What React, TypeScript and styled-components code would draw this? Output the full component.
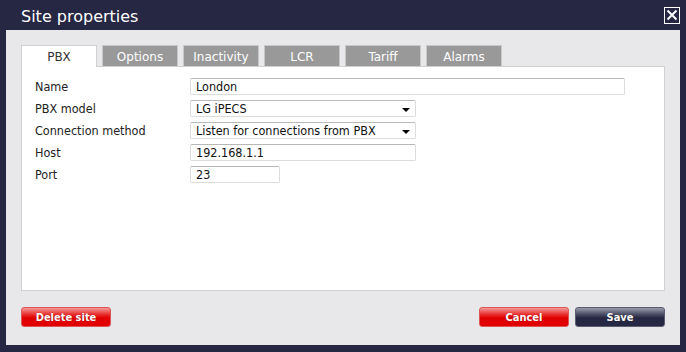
import React from "react";
import styled, { createGlobalStyle } from "styled-components";

const Global = createGlobalStyle`
  html, body { margin: 0; padding: 0; background: #252743; }
  body { width: 686px; height: 352px; overflow: hidden; font-family: "DejaVu Sans", Verdana, sans-serif; }
`;

const Dialog = styled.div`
  width: 686px;
  height: 352px;
  background: #252743;
  box-sizing: border-box;
  padding: 0 6px 7px 6px;
  display: flex;
  flex-direction: column;
`;

const TitleBar = styled.div`
  height: 30px;
  display: flex;
  align-items: center;
  justify-content: space-between;
  padding-left: 15px;
`;

const Title = styled.div`
  color: #fff;
  font-family: "DejaVu Sans", Verdana, sans-serif;
  font-size: 16px;
  margin-top: 2px;
`;

const Close = styled.div`
  width: 14px;
  height: 15px;
  border: 1px solid #fff;
  display: flex;
  align-items: center;
  justify-content: center;
`;

const Body = styled.div`
  flex: 1;
  background: #e8e8ea;
  padding: 15px 15px 0 15px;
  display: flex;
  flex-direction: column;
`;

const Tabs = styled.div`
  display: flex;
  gap: 5px;
  height: 21px;
`;

const Tab = styled.div<{ $active?: boolean }>`
  width: 76px;
  box-sizing: border-box;
  height: ${(p) => (p.$active ? "22px" : "21px")};
  background: ${(p) => (p.$active ? "#fff" : "#999")};
  border: 1px solid ${(p) => (p.$active ? "#d0d0d0" : "#c8c8c8")};
  border-bottom: none;
  color: ${(p) => (p.$active ? "#333" : "#fff")};
  font-size: 12px;
  padding-top: 1px;
  display: flex;
  align-items: center;
  justify-content: center;
  position: relative;
  z-index: ${(p) => (p.$active ? 1 : 0)};
`;

const Panel = styled.div`
  height: 225px;
  background: #fff;
  border: 1px solid #d0d0d0;
  box-sizing: border-box;
  padding: 11px 0 0 13px;
  display: flex;
  flex-direction: column;
  gap: 5px;
`;

const Row = styled.div`
  display: flex;
  align-items: center;
  height: 17px;
`;

const Label = styled.div`
  width: 155px;
  font-family: "DejaVu Sans Condensed", "DejaVu Sans", sans-serif;
  font-size: 12.5px;
  color: #222;
`;

const Field = styled.div<{ $w: number }>`
  width: ${(p) => p.$w}px;
  height: 17px;
  box-sizing: border-box;
  border: 1px solid #dcdcdc;
  border-top-color: #b8b8b8;
  border-radius: 2px;
  background: #fff;
  font-family: "DejaVu Sans Condensed", "DejaVu Sans", sans-serif;
  font-size: 12.5px;
  color: #111;
  padding-left: 5px;
  display: flex;
  align-items: center;
  justify-content: space-between;
`;

const Arrow = styled.div`
  width: 0;
  height: 0;
  border-left: 4px solid transparent;
  border-right: 4px solid transparent;
  border-top: 4px solid #000;
  margin-right: 5px;
  margin-top: 3px;
`;

const Footer = styled.div`
  display: flex;
  justify-content: space-between;
  margin-top: 16px;
`;

const Right = styled.div`
  display: flex;
  gap: 6px;
`;

const Button = styled.div<{ $dark?: boolean }>`
  width: 90px;
  height: 20px;
  box-sizing: border-box;
  border-radius: 3px;
  border: 1px solid ${(p) => (p.$dark ? "#5a5c70" : "#d55")};
  background: ${(p) =>
    p.$dark
      ? "linear-gradient(#9a9bab 0%, #4b4d66 35%, #262843 55%, #262843 100%)"
      : "linear-gradient(#f39a9a 0%, #e93030 35%, #e00000 55%, #e00000 100%)"};
  color: #fff;
  font-family: "DejaVu Sans Condensed", "DejaVu Sans", sans-serif;
  font-weight: bold;
  font-size: 11px;
  display: flex;
  align-items: center;
  justify-content: center;
  text-shadow: 0 0 1px rgba(0,0,0,0.4);
`;

export default function App() {
  const rows: { label: string; value: string; w: number; select?: boolean }[] = [
    { label: "Name", value: "London", w: 435 },
    { label: "PBX model", value: "LG iPECS", w: 226, select: true },
    { label: "Connection method", value: "Listen for connections from PBX", w: 226, select: true },
    { label: "Host", value: "192.168.1.1", w: 226 },
    { label: "Port", value: "23", w: 90 },
  ];
  return (
    <>
      <Global />
      <Dialog>
        <TitleBar>
          <Title>Site properties</Title>
          <Close>
            <svg width="12" height="12" viewBox="0 0 12 12">
              <path d="M1.5 1.5 L10.5 10.5 M10.5 1.5 L1.5 10.5" stroke="#fff" strokeWidth="2" />
            </svg>
          </Close>
        </TitleBar>
        <Body>
          <Tabs>
            <Tab $active>PBX</Tab>
            <Tab>Options</Tab>
            <Tab>Inactivity</Tab>
            <Tab>LCR</Tab>
            <Tab>Tariff</Tab>
            <Tab>Alarms</Tab>
          </Tabs>
          <Panel>
            {rows.map((r) => (
              <Row key={r.label}>
                <Label>{r.label}</Label>
                <Field $w={r.w}>
                  <span>{r.value}</span>
                  {r.select && <Arrow />}
                </Field>
              </Row>
            ))}
          </Panel>
          <Footer>
            <Button>Delete site</Button>
            <Right>
              <Button>Cancel</Button>
              <Button $dark>Save</Button>
            </Right>
          </Footer>
        </Body>
      </Dialog>
    </>
  );
}
